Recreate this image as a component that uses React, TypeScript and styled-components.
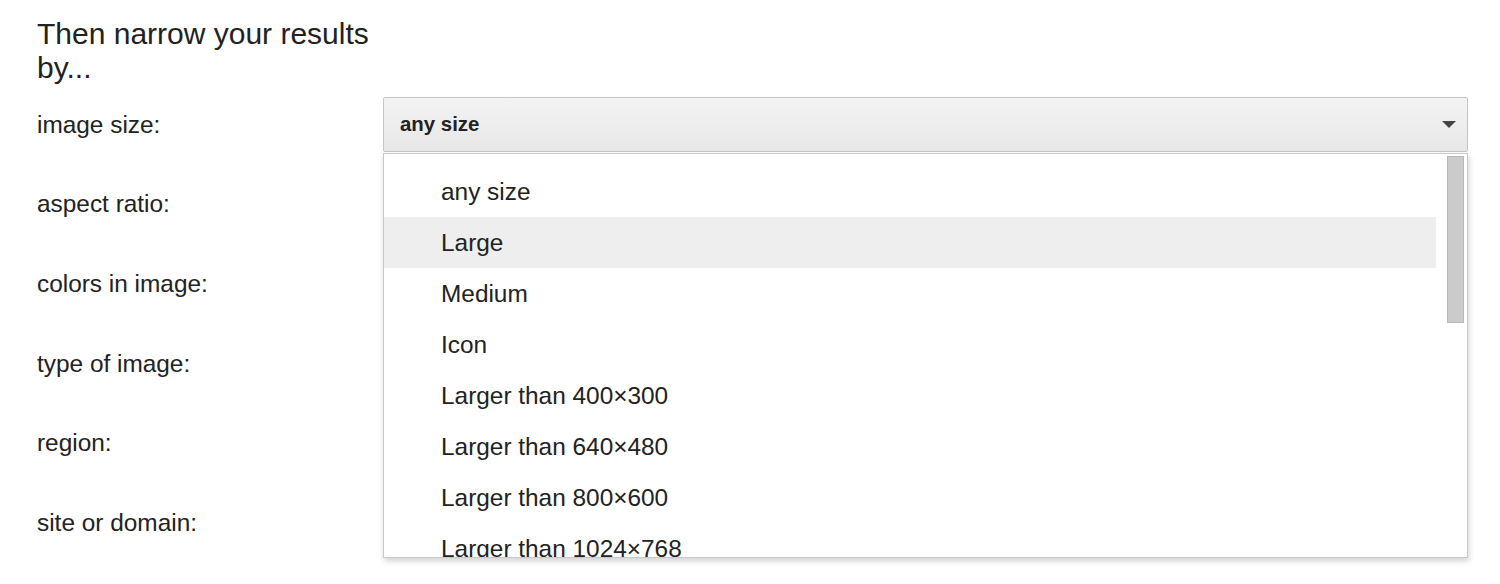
import React from "react";
import styled, { createGlobalStyle } from "styled-components";

const GlobalStyle = createGlobalStyle`
  html, body {
    margin: 0;
    padding: 0;
    background: #ffffff;
  }
  body {
    font-family: "Liberation Sans", Arial, sans-serif;
    color: #222222;
  }
`;

const Page = styled.div`
  width: 1500px;
  height: 584px;
  box-sizing: border-box;
  padding: 17px 32px 0 37px;
  overflow: hidden;
`;

const Heading = styled.h2`
  margin: 0;
  width: 346px;
  font-size: 30px;
  line-height: 34px;
  font-weight: normal;
  color: #222222;
`;

const Form = styled.div`
  display: flex;
  flex-direction: column;
`;

const Row = styled.div`
  display: flex;
  align-items: center;
  height: 79.6px;
`;

const Label = styled.div`
  width: 346px;
  flex: none;
  font-size: 24.4px;
  line-height: 30px;
  color: #222222;
`;

const Field = styled.div`
  position: relative;
  flex: 1;
`;

const SelectButton = styled.div`
  box-sizing: border-box;
  height: 55px;
  display: flex;
  align-items: center;
  justify-content: space-between;
  padding: 0 11px 0 16px;
  border: 1px solid #c6c6c6;
  border-radius: 2px;
  background: linear-gradient(#f3f3f3, #e7e7e7);
  font-size: 20.4px;
  font-weight: bold;
  color: #222222;
`;

const Arrow = styled.svg`
  width: 14px;
  height: 7px;
  display: block;
`;

const Menu = styled.div`
  position: absolute;
  top: calc(100% + 1px);
  left: 0;
  right: 0;
  height: 405px;
  box-sizing: border-box;
  border: 1px solid #c9c9c9;
  background: #ffffff;
  box-shadow: 1px 3px 6px rgba(0, 0, 0, 0.18);
  overflow: hidden;
  z-index: 2;
`;

const List = styled.ul`
  list-style: none;
  margin: 0;
  padding: 12px 31px 0 0;
`;

const Item = styled.li<{ $active?: boolean }>`
  height: 51px;
  padding: 0 0 0 57px;
  line-height: 51px;
  font-size: 24.4px;
  color: #222222;
  white-space: nowrap;
  background: ${(p) => (p.$active ? "#eeeeee" : "transparent")};
`;

const ScrollThumb = styled.div`
  position: absolute;
  top: 2px;
  right: 3px;
  width: 17px;
  height: 167px;
  box-sizing: border-box;
  background: #cbcbcb;
  border: 1px solid #b9b9b9;
`;

const labels = [
  "image size:",
  "aspect ratio:",
  "colors in image:",
  "type of image:",
  "region:",
  "site or domain:",
];

const options = [
  "any size",
  "Large",
  "Medium",
  "Icon",
  "Larger than 400×300",
  "Larger than 640×480",
  "Larger than 800×600",
  "Larger than 1024×768",
];

export default function App() {
  return (
    <>
      <GlobalStyle />
      <Page>
        <Heading>Then narrow your results by...</Heading>
        <Form>
          {labels.map((label, i) => (
            <Row key={label}>
              <Label>{label}</Label>
              {i === 0 && (
                <Field>
                  <SelectButton>
                    <span>any size</span>
                    <Arrow viewBox="0 0 14 7">
                      <path d="M0 0 L14 0 L7 7 Z" fill="#444444" />
                    </Arrow>
                  </SelectButton>
                  <Menu>
                    <List>
                      {options.map((opt) => (
                        <Item key={opt} $active={opt === "Large"}>
                          {opt}
                        </Item>
                      ))}
                    </List>
                    <ScrollThumb />
                  </Menu>
                </Field>
              )}
            </Row>
          ))}
        </Form>
      </Page>
    </>
  );
}
